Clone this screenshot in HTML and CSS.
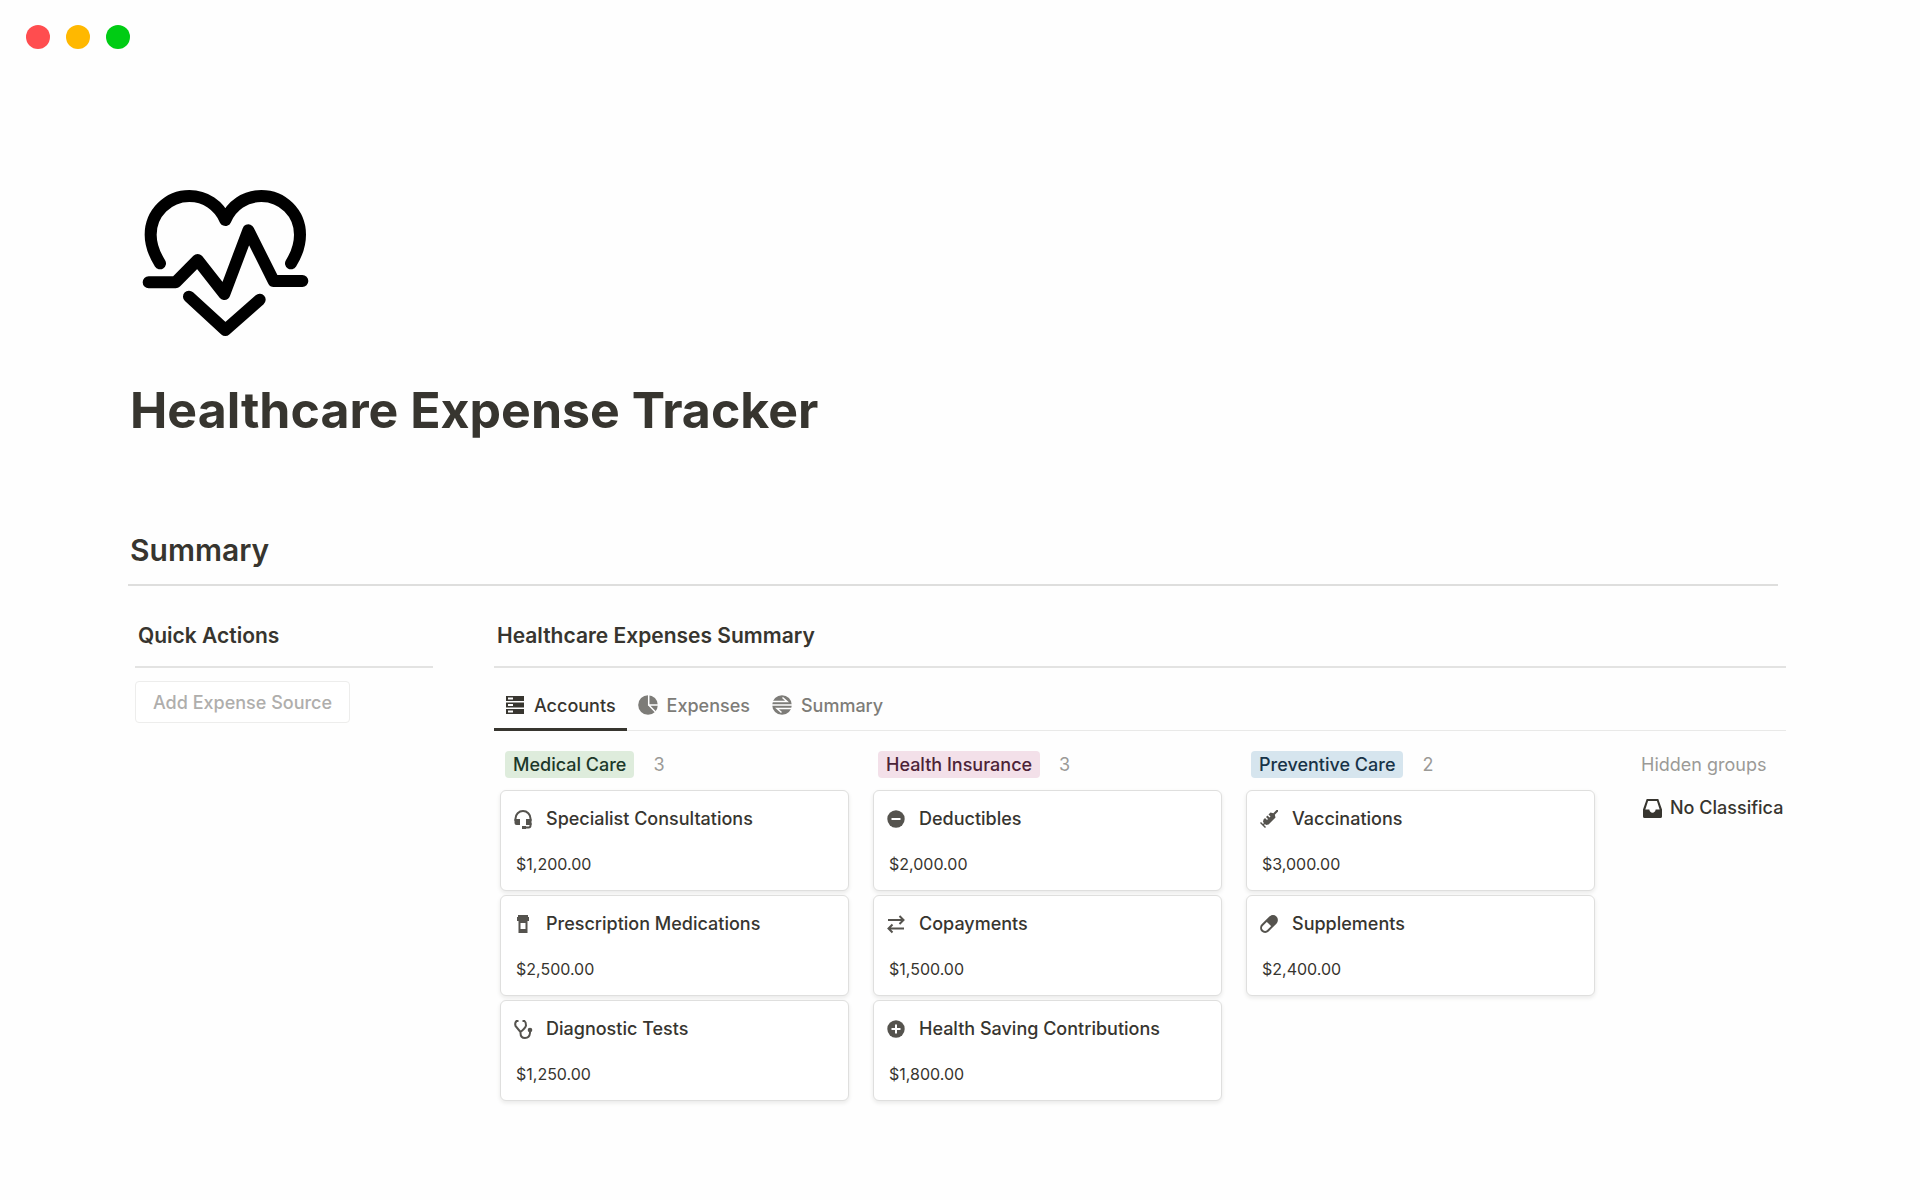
FILE: index.html
```html
<!DOCTYPE html>
<html lang="en">
  <head>
    <meta charset="utf-8">
    <title>Healthcare Expense Tracker</title>
    <link rel="stylesheet" href="styles.css">
  </head>
  <body>
    <div class="window-dots">
      <span class="dot red"></span>
      <span class="dot yellow"></span>
      <span class="dot green"></span>
    </div>

    <main class="page">
      <svg class="page-icon" viewBox="420 560 510 456">
        <path d="M480 789C462 760 452 736 452 703A116 116 0 0 1 568 587C616 587 657 615 676 659C695 615 736 587 784 587A116 116 0 0 1 900 703C900 736 891 760 873 789"/>
        <path d="M446 846H527L593 779L673 881L745 690L821 842H907"/>
        <path d="M567 889L676 989L779 898"/>
      </svg>
      <h1>Healthcare Expense Tracker</h1>
      <h2>Summary</h2>

      <div class="columns">
        <aside class="actions">
          <h3>Quick Actions</h3>
          <button class="add-button">Add Expense Source</button>
        </aside>

        <section class="summary">
          <h3>Healthcare Expenses Summary</h3>
          <nav class="tabs">
            <a class="tab active" href="#accounts">
              <svg class="icon" viewBox="-1 -1 20 20">
                <path fill-rule="evenodd" d="M0 0H18V5H0ZM2 1.500V3.500H7V1.500ZM0 6.500H18V11.500H0ZM2 8V10H7V8ZM0 13H18V18H0ZM2 14.500V16.500H7V14.500Z"/>
              </svg>
              Accounts
            </a>
            <a class="tab" href="#expenses">
              <svg class="icon" viewBox="0 0 20 20">
                <circle cx="10" cy="10" r="9.800"/>
                <path class="cut" d="M10.700 0V10H20M10.700 10L17.500 17"/>
              </svg>
              Expenses
            </a>
            <a class="tab" href="#summary">
              <svg class="icon" viewBox="0 0 20 20">
                <circle cx="10" cy="10" r="9.800"/>
                <path class="cut" d="M0 10H20M0 6.500H15L10.500 2.500M20 13.500H5L9.500 17.500"/>
              </svg>
              Summary
            </a>
          </nav>

          <div class="board">
            <div class="group">
              <div class="group-head"><span class="tag tag-green">Medical Care</span><span class="count">3</span></div>
              <article class="card">
                <h4>
                  <svg class="icon" viewBox="0 0 18 18">
                    <path class="line" d="M1.500 11V8.500a7.500 7.500 0 0 1 15 0V11M16.500 13v2.500q0 2-2 2H9"/>
                    <path d="M.5 9H6V15H2.500Q.5 15 .5 13ZM12 9H17.500V15H12ZM8 16H12V19H8Z"/>
                  </svg>
                  Specialist Consultations
                </h4>
                <p>$1,200.00</p>
              </article>
              <article class="card">
                <h4>
                  <svg class="icon" viewBox="0 0 18 18">
                    <path fill-rule="evenodd" d="M4 0H14V2H15V6H13.500V18H4.500V6H3V2H4ZM6.500 8V14H11.500V8Z"/>
                  </svg>
                  Prescription Medications
                </h4>
                <p>$2,500.00</p>
              </article>
              <article class="card">
                <h4>
                  <svg class="icon" viewBox="0 0 18 18">
                    <path class="line" d="M4.500 1H2.500Q.5 3 1.500 6L6.500 12Q11.500 8 12 5.500Q12 2 10.500 1H8.500M6.500 11.500V13q0 5 4.500 5t5-5v-2"/>
                    <circle cx="16" cy="10" r="2.300"/>
                  </svg>
                  Diagnostic Tests
                </h4>
                <p>$1,250.00</p>
              </article>
            </div>

            <div class="group">
              <div class="group-head"><span class="tag tag-pink">Health Insurance</span><span class="count">3</span></div>
              <article class="card">
                <h4>
                  <svg class="icon" viewBox="0 0 18 18">
                    <circle cx="9" cy="9" r="8.700"/>
                    <path class="cut" d="M4.500 9H13.500"/>
                  </svg>
                  Deductibles
                </h4>
                <p>$2,000.00</p>
              </article>
              <article class="card">
                <h4>
                  <svg class="icon" viewBox="0 0 18 18">
                    <path class="line" d="M1 5H16M12.500 1L16.500 5L12.500 9M17 13.500H2M5.500 9.500L1.500 13.500L5.500 17.500"/>
                  </svg>
                  Copayments
                </h4>
                <p>$1,500.00</p>
              </article>
              <article class="card">
                <h4>
                  <svg class="icon" viewBox="0 0 18 18">
                    <circle cx="9" cy="9" r="8.700"/>
                    <path class="cut" d="M4.500 9H13.500M9 4.500V13.500"/>
                  </svg>
                  Health Saving Contributions
                </h4>
                <p>$1,800.00</p>
              </article>
            </div>

            <div class="group">
              <div class="group-head"><span class="tag tag-blue">Preventive Care</span><span class="count">2</span></div>
              <article class="card">
                <h4>
                  <svg class="icon" viewBox="0 0 18 18">
                    <path d="M18 0L18 1.500L14.800 4.700L15.500 7.500L8.500 14.500L6 15L5 14L4 15L6 17L5 18L0 13L1 12L3 14L4 13L3 12L3.500 9.500L5 8L7 10L8 9L6 7L7.500 5.500L9.500 7.500L10.500 6.500L8.500 4.500L10.500 2.500L13.300 3.200L16.500 0Z"/>
                  </svg>
                  Vaccinations
                </h4>
                <p>$3,000.00</p>
              </article>
              <article class="card">
                <h4>
                  <svg class="icon" viewBox="0 0 18 18">
                    <rect class="line" x="-.500" y="5" width="19" height="8" rx="4" transform="rotate(-45 9 9)"/>
                    <path d="M9 5H14.500a4 4 0 0 1 0 8H9Z" transform="rotate(-45 9 9)"/>
                  </svg>
                  Supplements
                </h4>
                <p>$2,400.00</p>
              </article>
            </div>

            <div class="hidden-groups">
              <div class="hidden-label">Hidden groups</div>
              <a class="hidden-item" href="#no-classification">
                <svg class="icon" viewBox="0 0 18 18">
                  <path fill-rule="evenodd" d="M3.500 0H14.500L18 10V16.500Q18 18 16.500 18H1.500Q0 18 0 16.500V10ZM4.800 2L2.200 10H6Q6.500 13 9 13T12 10H15.800L13.200 2Z"/>
                </svg>
                No Classifica
              </a>
            </div>
          </div>
        </section>
      </div>
    </main>
  </body>
</html>
```
FILE: styles.css
```css
/* Reset default styles */
* {
  margin: 0;
  padding: 0;
  box-sizing: border-box;
}

body {
  font-family: Inter, "Liberation Sans", sans-serif;
  font-size: 18px;
  color: #37352f;
  background-color: #fefefe;
}

a {
  color: inherit;
  text-decoration: none;
}

.window-dots {
  display: flex;
  gap: 16px;
  padding: 25px 26px 0;
}

.dot {
  width: 24px;
  height: 24px;
  border-radius: 50%;
}

.red {
  background-color: #ff4d4f;
}

.yellow {
  background-color: #ffb800;
}

.green {
  background-color: #00cc14;
}

/* Page header */
.page {
  padding: 138px 134px 0 128px;
}

.page-icon {
  display: block;
  width: 170px;
  height: 152px;
  margin-left: 12px;
  fill: none;
  stroke: #000;
  stroke-width: 36;
  stroke-linecap: round;
  stroke-linejoin: round;
}

h1 {
  margin-top: 39px;
  padding-left: 2px;
  font-size: 50px;
  line-height: 64px;
  font-weight: 700;
}

h2 {
  margin: 88px 8px 0 0;
  padding: 0 2px 14px;
  font-size: 30px;
  line-height: 40px;
  font-weight: 600;
  border-bottom: 2px solid #dededd;
}

h3 {
  padding: 0 3px 16px;
  font-size: 21px;
  line-height: 28px;
  font-weight: 600;
  border-bottom: 2px solid #e3e3e2;
}

/* Two columns below the summary heading */
.columns {
  display: flex;
  gap: 61px;
  padding: 36px 0 0 7px;
}

.actions {
  flex: 0 0 298px;
}

.summary {
  flex: 1;
  min-width: 0;
}

.add-button {
  height: 42px;
  margin-top: 13px;
  padding: 0 17px;
  font: inherit;
  font-weight: 500;
  color: #afaeac;
  background-color: #fff;
  border: 1px solid #ededec;
  border-radius: 4px;
}

.icon {
  flex: none;
  width: 18px;
  height: 18px;
  fill: currentColor;
  overflow: visible;
}

.line {
  fill: none;
  stroke: currentColor;
  stroke-width: 2;
}

.cut {
  fill: none;
  stroke: #fff;
  stroke-width: 2;
}

.tabs {
  display: flex;
  border-bottom: 1px solid #e9e9e8;
}

.tab {
  display: flex;
  align-items: center;
  gap: 9px;
  height: 63px;
  margin-bottom: -1px;
  padding: 14px 11px 0;
  font-weight: 500;
  color: #7d7c78;
  border-bottom: 3px solid transparent;
}

.tab .icon {
  width: 20px;
  height: 20px;
}

.tab .cut {
  stroke-width: 1.5;
}

.tab.active {
  color: #37352f;
  border-bottom-color: #37352f;
}

/* Board */
.board {
  display: flex;
  gap: 24px;
  padding: 20px 0 8px 6px;
  overflow: hidden;
}

.group {
  display: flex;
  flex: 0 0 349px;
  flex-direction: column;
  gap: 4px;
}

.group-head {
  display: flex;
  align-items: center;
  gap: 19px;
  height: 27px;
  margin-bottom: 8px;
  padding-left: 5px;
}

.tag {
  padding: 0 8px;
  line-height: 27px;
  font-weight: 500;
  border-radius: 4px;
}

.tag-green {
  color: #1c3829;
  background-color: #deecdc;
}

.tag-pink {
  color: #4c2337;
  background-color: #f3e0e9;
}

.tag-blue {
  color: #183347;
  background-color: #d6e5ee;
}

.count {
  color: #9b9a97;
}

.card {
  height: 101px;
  padding: 14px 13px;
  background-color: #fff;
  border: 1px solid #dfdfde;
  border-radius: 6px;
  box-shadow: 0 2px 4px #e9e9e8;
}

.card h4 {
  display: flex;
  align-items: center;
  gap: 14px;
  font-size: 18px;
  line-height: 28px;
  font-weight: 500;
}

.card .icon {
  color: #55534e;
}

.card p {
  margin-top: 19px;
  padding-left: 2px;
  font-size: 16px;
  line-height: 24px;
}

.hidden-groups {
  flex: 1;
  padding-left: 22px;
  white-space: nowrap;
}

.hidden-label {
  line-height: 27px;
  color: #9b9a97;
}

.hidden-item {
  display: flex;
  align-items: center;
  gap: 8px;
  margin-top: 16px;
  padding-left: 2px;
  line-height: 28px;
  font-weight: 500;
}

.hidden-item .icon {
  width: 19px;
  height: 19px;
}
```
